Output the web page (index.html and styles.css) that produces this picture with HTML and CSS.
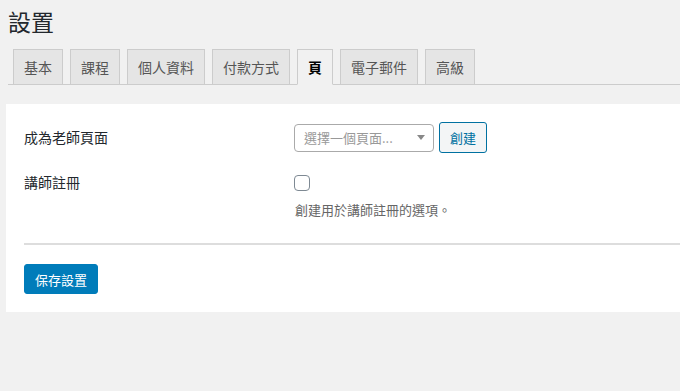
FILE: index.html
```html
<!DOCTYPE html>
<html lang="zh-Hant">
  <head>
    <meta charset="UTF-8" />
    <meta name="viewport" content="width=device-width, initial-scale=1.0" />
    <title>設置</title>
    <link rel="stylesheet" href="styles.css">
  </head>
  <body>
    <div id="wrap">
      <h1 class="page-title">設置</h1>
      <div class="nav-tabs">
        <a class="nav-tab">基本</a>
        <a class="nav-tab">課程</a>
        <a class="nav-tab">個人資料</a>
        <a class="nav-tab">付款方式</a>
        <a class="nav-tab nav-tab-active">頁</a>
        <a class="nav-tab">電子郵件</a>
        <a class="nav-tab">高級</a>
      </div>

      <div class="panel">
        <div class="form-row first">
          <div class="form-label">成為老師頁面</div>
          <div class="form-field">
            <div class="select">
              <span class="select-text">選擇一個頁面...</span>
              <span class="select-arrow"></span>
            </div>
            <button class="button-secondary">創建</button>
          </div>
        </div>
        <div class="form-row">
          <div class="form-label small">講師註冊</div>
          <div class="form-field column">
            <span class="checkbox"></span>
            <p class="description">創建用於講師註冊的選項。</p>
          </div>
        </div>
        <hr class="divider" />
        <button class="button-primary">保存設置</button>
      </div>
    </div>
  </body>
</html>
```

FILE: styles.css
```css
body {
  margin: 0;
  padding: 0;
  background-color: #f1f1f1;
  font-family: "Noto Sans CJK TC", "Noto Sans", sans-serif;
  color: #23282d;
}
#wrap {
  padding-left: 6px;
}
.page-title {
  margin: 0 0 0 2px;
  padding-top: 7px;
  font-size: 23px;
  font-weight: 400;
  line-height: 29px;
}
.nav-tabs {
  display: flex;
  margin-top: 13px;
  border-bottom: 1px solid #ccc;
  margin-left: 2px;
}
.nav-tab {
  display: block;
  margin-left: 7px;
  margin-bottom: -1px;
  padding: 5px 10px;
  font-size: 14px;
  line-height: 24px;
  border: 1px solid #ccc;
  background-color: #e5e5e5;
  color: #555;
  font-weight: 400;
}
.nav-tab:first-child {
  margin-left: 5px;
}
.nav-tab-active {
  background-color: #f1f1f1;
  border-bottom-color: #f1f1f1;
  color: #000;
  font-weight: 700;
}
.panel {
  margin-top: 19px;
  background-color: #fff;
  padding: 18px 0 18px 18px;
}
.form-row {
  display: grid;
  grid-template-columns: 270px 1fr;
  align-items: start;
  margin-top: 21px;
}
.form-row.first {
  margin-top: 0;
}
.form-label {
  font-size: 14px;
  line-height: 31px;
  font-weight: 400;
}
.form-label.small {
  line-height: 17px;
}
.form-field {
  display: flex;
  align-items: center;
  gap: 5px;
}
.form-field.column {
  flex-direction: column;
  align-items: flex-start;
  gap: 0;
}
.select {
  box-sizing: border-box;
  width: 140px;
  height: 28px;
  border: 1px solid #aaa;
  border-radius: 4px;
  display: flex;
  align-items: center;
  justify-content: space-between;
  padding: 0 8px 0 9px;
}
.select-text {
  font-size: 13px;
  color: #999;
}
.select-arrow {
  width: 0;
  height: 0;
  border-left: 4px solid transparent;
  border-right: 4px solid transparent;
  border-top: 5px solid #888;
}
.button-secondary {
  box-sizing: border-box;
  height: 31px;
  width: 48px;
  padding: 0;
  border: 1px solid #0071a1;
  border-radius: 3px;
  background-color: #f3f5f6;
  color: #0071a1;
  font-family: inherit;
  font-size: 13px;
}
.checkbox {
  box-sizing: border-box;
  display: block;
  width: 16px;
  height: 16px;
  border: 1px solid #7e8993;
  border-radius: 4px;
  margin-top: 1px;
}
.description {
  margin: 10px 0 0 1px;
  font-size: 13px;
  line-height: 18px;
  color: #666;
}
.divider {
  margin: 24px 0 0;
  border: 0;
  border-top: 2px solid #ddd;
}
.button-primary {
  display: block;
  margin-top: 19px;
  box-sizing: border-box;
  height: 30px;
  width: 74px;
  padding: 0;
  border: 1px solid #007cba;
  border-radius: 3px;
  background-color: #007cba;
  color: #fff;
  font-family: inherit;
  font-size: 13px;
}
```
